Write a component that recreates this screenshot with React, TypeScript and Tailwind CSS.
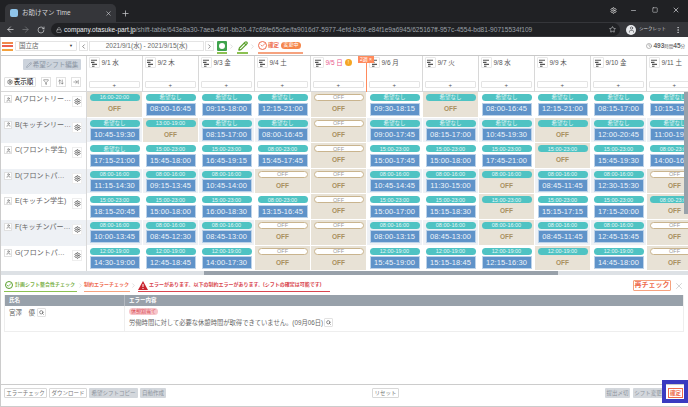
import { Fragment } from "react";
import {
  ArrowLeft,
  ArrowRight,
  ArrowUpDown,
  ArrowRightToLine,
  Check,
  ChevronLeft,
  ChevronRight,
  Clock,
  EllipsisVertical,
  Filter,
  Lock,
  Minus,
  Pencil,
  Plus,
  RotateCw,
  Search,
  Settings,
  Square,
  Star,
  User,
  X,
} from "lucide-react";

const days = [
  "9/1 水", "9/2 木", "9/3 金", "9/4 土", "9/5 日", "9/6 月",
  "9/7 火", "9/8 水", "9/9 木", "9/10 金", "9/11 土",
];

const H = "希望なし";
const O = "OFF";

type Row = { name: string; cells: [string, string][] };

const rows: Row[] = [
  {
    name: "A(フロントリー…",
    cells: [
      ["16:00-20:00", O], [H, "08:00-16:45"], [H, "09:15-18:00"], [H, "12:15-21:00"], [O, O], [H, "09:30-18:15"],
      [H, O], [H, "08:00-16:45"], [H, "12:15-21:00"], [H, "08:15-17:00"], [H, "10:15-19:00"],
    ],
  },
  {
    name: "B(キッチンリー…",
    cells: [
      [H, "10:45-19:30"], ["13:00-19:00", O], [H, "08:15-17:00"], [H, "08:00-16:45"], [O, O], [H, "09:00-17:45"],
      [H, "08:15-17:00"], [H, "10:45-19:30"], [H, O], [H, "12:00-20:45"], [H, "11:00-19:45"],
    ],
  },
  {
    name: "C(フロント学生)",
    cells: [
      [H, "17:15-21:00"], ["15:00-23:00", "15:45-18:00"], ["15:00-23:00", "16:45-19:15"], ["08:00-23:00", "15:45-17:45"], [O, O], ["15:00-23:00", "15:00-17:45"],
      ["15:00-23:00", "15:00-18:00"], ["15:00-23:00", "17:45-21:00"], ["15:00-23:00", O], ["15:00-23:00", "15:45-19:30"], ["08:00-23:00", "14:00-16:45"],
    ],
  },
  {
    name: "D(フロントパ…",
    cells: [
      ["08:00-16:00", "11:15-14:30"], ["08:00-16:00", "09:15-13:45"], ["08:00-16:00", "10:45-14:00"], [O, O], [O, O], ["08:00-16:00", "10:45-14:45"],
      ["08:00-16:00", "11:30-15:00"], ["08:00-16:00", O], ["08:00-16:00", "08:45-11:45"], ["08:00-16:00", "12:30-15:30"], [O, O],
    ],
  },
  {
    name: "E(キッチン学生)",
    cells: [
      ["15:00-23:00", "18:15-20:45"], ["15:00-23:00", "15:00-18:00"], ["15:00-23:00", "16:00-18:30"], ["08:00-23:00", "13:15-16:45"], [O, O], ["15:00-23:00", "15:00-17:00"],
      ["15:00-23:00", "15:15-18:30"], ["15:00-23:00", O], ["15:00-23:00", "15:15-17:15"], ["15:00-23:00", "17:15-20:00"], ["08:00-23:00", O],
    ],
  },
  {
    name: "F(キッチンパー…",
    cells: [
      ["08:00-16:00", "10:00-13:45"], ["08:00-16:00", "08:45-12:30"], ["08:00-16:00", "08:45-13:00"], [O, O], [O, O], ["08:00-16:00", "08:00-13:15"],
      ["08:00-16:00", "08:45-13:00"], ["08:00-16:00", O], ["08:00-16:00", "08:45-11:45"], ["08:00-16:00", "12:45-15:45"], [O, O],
    ],
  },
  {
    name: "G(フロントパ…",
    cells: [
      ["12:00-19:00", "14:30-19:00"], ["12:00-19:00", "12:45-18:45"], ["12:00-19:00", "14:00-17:30"], [O, O], [O, O], ["12:00-19:00", "15:45-19:00"],
      ["12:00-19:00", "15:15-18:45"], ["12:00-19:00", "12:15-16:30"], ["12:00-19:00", O], ["12:00-19:00", "14:45-18:00"], [O, O],
    ],
  },
];

const Cell = ({ pill, value, even }: { pill: string; value: string; even: boolean }) => {
  const off = value === O;
  return (
    <div
      className={`h-[25.6px] px-[2.5px] pt-[2px] border-r border-b border-white flex flex-col ${
        off ? "bg-[#e8e2d6]" : even ? "bg-[#eef1f5]" : "bg-white"
      }`}
    >
      {pill === O ? (
        <div className="h-[7px] rounded-full bg-white border border-[#c9b48e] flex items-center justify-center text-[5.5px] text-[#9a9a9a]">
          OFF
        </div>
      ) : (
        <div className="h-[7px] rounded-full bg-[#4fc3c3] flex items-center justify-center text-[5.5px] text-[#e6f7f7]">
          {pill}
        </div>
      )}
      {off ? (
        <div className="mt-[3px] text-center text-[6.5px] leading-[10px] font-bold text-[#a8905f]">OFF</div>
      ) : (
        <div className="mt-[1.5px] h-[13px] bg-[#5f93c9] border border-[#bcd2e8] flex items-center justify-center text-[7.5px] tracking-[0.1px] text-[#eef4fa]">
          {value}
        </div>
      )}
    </div>
  );
};

const GrayBtn = ({ children, className = "" }: { children: string; className?: string }) => (
  <div className={`h-[10px] rounded-[1px] bg-[#d3d7dc] text-[#8d949c] text-[5.5px] flex items-center justify-center whitespace-nowrap overflow-hidden ${className}`}>
    {children}
  </div>
);

const LineBtn = ({ children, className = "" }: { children: string; className?: string }) => (
  <div className={`h-[10px] rounded-[1px] bg-white border border-[#d8d8d8] text-[#777] text-[5.5px] flex items-center justify-center whitespace-nowrap ${className}`}>
    {children}
  </div>
);

const SearchBtn = () => (
  <span className="inline-flex w-[9px] h-[9px] items-center justify-center rounded-[1px] border border-[#e2e2e2] bg-white shrink-0">
    <Search size={5} strokeWidth={3} className="text-[#555]" />
  </span>
);

const Bars = () => (
  <svg width="8" height="8" viewBox="0 0 8 8" className="text-[#555]">
    <path d="M1 1.2h6M1 3.4h3.5M2 5.4h5M2 7.2h2.5" stroke="currentColor" strokeWidth="1.1" fill="none" />
  </svg>
);

export default function App() {
  return (
    <div className="relative w-[688px] h-[407px] overflow-hidden bg-white flex flex-col font-['Liberation_Sans','Noto_Sans_CJK_JP',sans-serif]">
      {/* browser chrome */}
      <div className="h-[22px] bg-[#202124] flex items-end shrink-0 text-[#dfe1e5]">
        <div className="ml-[5px] w-[111px] h-[18px] bg-[#35363a] rounded-t-[5px] flex items-center pl-[5px] pr-[4px]">
          <span className="w-[8px] h-[8px] rounded-[2px] bg-[#8fc4ea] mr-[4px]" />
          <span className="text-[6.5px] text-[#d5d7da]">お助けマン Time</span>
          <X size={7} strokeWidth={2} className="ml-auto text-[#d5d7da]" />
        </div>
        <Plus size={9} className="ml-[5px] mb-[4px] text-[#c5c7ca]" />
        <div className="ml-auto flex items-center h-full pb-[2px]">
          <Settings size={7} strokeWidth={3} className="mr-[13px] text-[#c8c8c8]" />
          <Minus size={7} className="mr-[15.5px]" />
          <Square size={6} className="mr-[14px]" />
          <X size={8} className="mr-[8px]" />
        </div>
      </div>
      <div className="h-[15px] bg-[#35363a] flex items-center shrink-0 text-[#d5d7da]">
        <ArrowLeft size={9} className="ml-[6px]" />
        <ArrowRight size={9} className="ml-[6px] text-[#77797c]" />
        <RotateCw size={8} className="ml-[7px]" />
        <div className="ml-[6px] w-[569px] h-[13px] shrink-0 rounded-full bg-[#202124] flex items-center pl-[5px] pr-[4px]">
          <Lock size={6} className="shrink-0 text-[#c5c7ca]" />
          <span className="ml-[2px] text-[6.6px] whitespace-nowrap text-[#9aa0a6]">
            <span className="text-[#e8eaed]">company.otasuke-part.jp</span>
            /shift-table/643e8a30-7aea-49f1-bb20-47c69fe65c6e/fa9016d7-5977-4efd-b30f-e84f1e9a6945/625167ff-957c-4554-bd81-90715534f109
          </span>
          <Star size={7} className="ml-auto text-[#d5d7da]" />
        </div>
        <span className="ml-[6px] w-[10px] h-[10px] shrink-0 rounded-full bg-[#e8eaed] flex items-center justify-center">
          <User size={7} className="text-[#35363a]" />
        </span>
        <span className="ml-[3px] text-[4.5px] whitespace-nowrap text-[#d5d7da]">シークレット</span>
        <EllipsisVertical size={8} className="ml-[8px] shrink-0" />
      </div>

      {/* toolbar */}
      <div className="h-[19px] flex items-center shrink-0 border-b border-[#c8c8c8] pl-[2px] pr-[3px] text-[#666]">
        <div className="w-[11px] flex flex-col gap-[1.5px]">
          <span className="h-[2px] bg-[#f08a4b]" />
          <span className="h-[2px] bg-[#ea5f4f]" />
          <span className="h-[2px] bg-[#f4a13c]" />
        </div>
        <div className="ml-[2px] w-[62px] h-[10px] border border-[#e4e4e4] rounded-[1px] flex items-center px-[3px] text-[6.5px]">
          国立店
          <span className="ml-auto text-[4px] text-[#333]">▼</span>
        </div>
        <div className="ml-[2px] w-[9px] h-[10px] border border-[#e4e4e4] flex items-center justify-center">
          <ChevronLeft size={7} strokeWidth={2.5} />
        </div>
        <div className="ml-[1px] w-[115px] h-[10px] border border-[#e4e4e4] flex items-center justify-center text-[6.5px]">
          2021/9/1(水) - 2021/9/15(水)
        </div>
        <div className="ml-[1px] w-[9px] h-[10px] border border-[#e4e4e4] flex items-center justify-center">
          <ChevronRight size={7} strokeWidth={2.5} />
        </div>
        <div className="ml-[3px] h-[15px] pt-[2px] border-b-2 border-[#8cc152] flex">
          <span className="w-[10px] h-[10px] rounded-[1px] bg-[#3fa34d] flex items-center justify-center">
            <span className="w-[6px] h-[6px] rounded-full bg-white" />
          </span>
        </div>
        <ChevronRight size={7} className="mx-[1px] text-[#ccc]" />
        <div className="ml-[1px] h-[15px] pt-[2px] border-b-2 border-[#8cc152] w-[11px] flex justify-center">
          <Pencil size={10} strokeWidth={3} className="text-[#5aa02c]" />
        </div>
        <ChevronRight size={7} className="mx-[1px] text-[#ccc]" />
        <div className="ml-[1px] h-[15px] border-b-2 border-[#f6a27e] flex items-center w-[45px]">
          <span className="w-[9px] h-[9px] rounded-full border border-[#ee6a4d] flex items-center justify-center">
            <Check size={6} strokeWidth={3} className="text-[#ee6a4d]" />
          </span>
          <span className="ml-[1px] text-[5.5px] font-bold text-[#ee6a4d]">確定</span>
          <span className="ml-[2px] h-[7px] w-[20px] rounded-full bg-[#f58549] text-white text-[5px] flex items-center justify-center">変更中</span>
        </div>
        <Clock size={6} className="ml-auto text-[#777]" />
        <span className="ml-[1px] text-[6.5px] font-bold text-[#666]">
          493<span className="text-[4.5px] font-normal">時間</span>45<span className="text-[4.5px] font-normal">分</span>
        </span>
      </div>

      {/* shift table */}
      <div className="relative h-[219px] overflow-hidden shrink-0 bg-[#dde1e5]">
        <div className="grid grid-cols-[87px_repeat(11,56px)] w-[703px]">
          <div className="h-[36px] border-r border-b border-[#d8d8d8] bg-white flex flex-col items-end pr-[5px] pl-[4px]">
            <div className="mt-[3px] w-[58px] h-[11px] rounded-[1px] bg-[#ccd3dc] flex items-center justify-center gap-[1px] text-[6.5px] text-[#8b95a3]">
              <Pencil size={6} />
              希望シフト編集
            </div>
            <div className="mt-[7px] w-full flex items-center gap-[5px]">
              <div className="mr-auto w-[32px] h-[10px] border border-[#e2e2e2] rounded-[1px] flex items-center justify-center gap-[1px] text-[6.5px]">
                <Settings size={6} strokeWidth={3} className="text-[#666]" />
                表示順
              </div>
              <div className="w-[10px] h-[10px] border border-[#e2e2e2] flex items-center justify-center">
                <Filter size={6} className="text-[#555]" />
              </div>
              <div className="w-[10px] h-[10px] border border-[#e2e2e2] flex items-center justify-center">
                <ArrowUpDown size={6} className="text-[#555]" />
              </div>
              <div className="w-[10px] h-[10px] border border-[#e2e2e2] flex items-center justify-center">
                <ArrowRightToLine size={6} className="text-[#555]" />
              </div>
            </div>
          </div>
          {days.map((d) => (
            <div key={d} className="h-[36px] bg-white border-r border-b border-[#d8d8d8] pl-[1.5px] pr-[2px] flex flex-col">
              <div className="mt-[1px] flex items-center">
                <span className="w-[11px] h-[11px] border border-[#e8e8e8] rounded-[1px] flex items-center justify-center shrink-0">
                  <Bars />
                </span>
                <span className={`ml-[2px] text-[6.5px] whitespace-nowrap ${d === "9/5 日" ? "text-[#e8588a]" : "text-[#555]"}`}>{d}</span>
                {d === "9/5 日" && (
                  <span className="ml-[2px] w-[7px] h-[7px] rounded-full bg-[#f5a623] text-white text-[5px] flex items-center justify-center">!</span>
                )}
              </div>
              <div className="mt-[13px] h-[7px] border border-[#e4e4e4] rounded-[1px] flex items-center justify-center text-[6px] leading-none text-[#555]">
                +
              </div>
            </div>
          ))}
          {rows.map((row, i) => (
            <Fragment key={row.name}>
              <div className={`h-[25.6px] border-r border-[#d8d8d8] flex items-start pl-[4px] pr-[4px] pt-[2px] ${i % 2 ? "bg-[#eef1f5]" : "bg-white"}`}>
                <span className="w-[8px] h-[8px] mt-[1px] bg-white border border-[#e0e0e0] flex items-center justify-center shrink-0">
                  <User size={5} strokeWidth={3} className="text-[#777]" />
                </span>
                <span className="ml-[3px] text-[7px] leading-[10px] whitespace-nowrap text-[#666]">{row.name}</span>
                <span className="ml-auto mt-[2px] w-[10px] h-[11px] bg-white border border-[#eee] flex items-center justify-center shrink-0">
                  <Settings size={7} strokeWidth={3} className="text-[#666]" />
                </span>
              </div>
              {row.cells.map(([pill, value], j) => (
                <Cell key={j} pill={pill} value={value} even={i % 2 === 1} />
              ))}
            </Fragment>
          ))}
        </div>
        {/* scrollbars and today marker */}
        <div className="absolute left-[204px] bottom-0 w-[354px] h-[4px] bg-[#98a1aa]" />
        <div className="absolute right-0 top-[36px] w-[4px] h-[122px] bg-[#98a1aa]" />
        <div className="absolute left-[366px] top-0 w-[1px] h-[36px] bg-[#ff8a5c]" />
        <div className="absolute left-[358px] top-0 w-[16px] h-[7px] bg-[#ff8a5c] text-white text-[5px] flex items-center justify-center">2週 ×</div>
      </div>

      {/* constraint check panel */}
      <div className="h-[109px] shrink-0 px-[4px] flex flex-col">
        <div className="h-[17px] flex items-end">
          <div className="w-[73px] h-[13px] border-b border-[#8cc152] flex items-center">
            <span className="w-[8px] h-[8px] ml-[1px] shrink-0 rounded-full border border-[#5aa02c] flex items-center justify-center">
              <Check size={6} strokeWidth={3} className="text-[#5aa02c]" />
            </span>
            <span className="ml-[2px] text-[5px] font-bold whitespace-nowrap text-[#7db24a]">計画シフト整合性チェック</span>
          </div>
          <ChevronRight size={7} className="mb-[3px] text-[#ccc]" />
          <div className="w-[46px] h-[13px] border-b border-[#f6a27e] flex items-center text-[5px] font-bold whitespace-nowrap text-[#ee6a4d]">
            制約エラーチェック
          </div>
          <ChevronRight size={7} className="mb-[3px] text-[#ccc]" />
          <div className="ml-[1px] w-[192px] h-[13px] border-b border-[#d9464f] flex items-center">
            <svg width="10" height="9" viewBox="0 0 10 9" className="shrink-0">
              <path d="M5 0L10 9H0Z" fill="#c9252f" />
              <path d="M5 3v3M5 7v1" stroke="#fff" strokeWidth="1" />
            </svg>
            <span className="ml-[1px] text-[5px] font-bold whitespace-nowrap text-[#d9464f]">
              エラーがあります。以下の制約エラーがあります。(シフトの確定は可能です)
            </span>
          </div>
          <div className="ml-auto mb-[1px] w-[38px] h-[11px] rounded-[1px] border border-[#f6a27e] flex items-center justify-center text-[7px] font-bold text-[#ee6a4d]">
            再チェック
          </div>
          <X size={10} strokeWidth={1} className="ml-[3px] mb-[1px] text-[#999]" />
        </div>
        <div className="mt-[3px] border border-[#eeeeee] border-t-0">
          <div className="h-[11px] bg-[#98a1aa] flex text-[5.5px] font-bold text-white">
            <div className="w-[120px] pl-[4px] flex items-center border-r border-[#b4bac1]">氏名</div>
            <div className="pl-[4px] flex items-center">エラー内容</div>
          </div>
          <div className="h-[25px] flex">
            <div className="w-[120px] pl-[4px] pt-[2px] flex items-start gap-[2px] border-r border-[#eeeeee] text-[6.5px] text-[#666]">
              宮澤　優
              <SearchBtn />
            </div>
            <div className="pl-[4px] pt-[2px] flex flex-col items-start">
              <span className="h-[7px] px-[2px] rounded-full bg-[#f7c6cb] flex items-center text-[5px] text-[#d9464f]">休憩割当て</span>
              <div className="mt-[3px] flex items-center gap-[1px] text-[6.3px] text-[#666]">
                労働時間に対して必要な休憩時間が取得できていません。(09月06日)
                <SearchBtn />
              </div>
            </div>
          </div>
        </div>
      </div>

      {/* footer */}
      <div className="h-[23px] shrink-0 border-t border-b border-[#cccccc] pl-[4px] pr-[5px] pt-[3px] flex items-start gap-[2px]">
        <LineBtn className="w-[43px]">エラーチェック</LineBtn>
        <LineBtn className="w-[38px]">ダウンロード</LineBtn>
        <GrayBtn className="w-[49px]">希望シフトコピー</GrayBtn>
        <GrayBtn className="w-[26px]">自動作成</GrayBtn>
        <LineBtn className="ml-[204px] w-[27px]">リセット</LineBtn>
        <GrayBtn className="ml-auto w-[25px]">提出〆切</GrayBtn>
        <GrayBtn className="ml-[1px] w-[30px] mr-[3px]">シフト変更</GrayBtn>
        <div className="w-[15px] h-[10px] border border-[#ee6a4d] text-[#ee6a4d] font-bold text-[5.5px] flex items-center justify-center">確定</div>
      </div>

      {/* window edge and the highlight around the confirm button */}
      <div className="absolute left-0 top-[37px] w-[1px] h-[370px] bg-[#cccccc]" />
      <div className="absolute left-[662px] top-[380px] w-[26px] h-[23px] border-[4px] border-[#3a3ac0]" />
    </div>
  );
}
